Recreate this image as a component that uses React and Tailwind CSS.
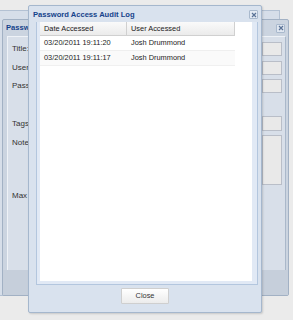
export default function App() {
  return (
    <div className="relative w-[293px] h-[320px] overflow-hidden bg-[#ebebeb] font-['Liberation_Sans',Arial,sans-serif] text-[7.4px] text-[#222]">
      {/* far back window */}
      <div className="absolute left-[-20px] top-[10px] w-[300px] h-[286px] bg-[#d6dee9] border border-[#b3c1d3]"></div>

      {/* back window */}
      <div className="absolute left-[2px] top-[19px] w-[287px] h-[277px] bg-[#cbd4e0] border border-[#a2b1c4] rounded-[2px] flex flex-col">
        <div className="h-[16px] flex items-center justify-between pl-[3px] pr-[3px]">
          <span className="font-bold text-[#15428b] text-[7.6px]">Password</span>
          <span className="w-[9px] h-[9px] flex items-center justify-center border border-[#a9b9cd] bg-[#dfe6f0] rounded-[1px]">
            <svg width="6" height="6" viewBox="0 0 6 6"><path d="M1 1L5 5M5 1L1 5" stroke="#5a7296" strokeWidth="1.2" /></svg>
          </span>
        </div>
        <div className="ml-[4px] mr-[2px] h-[234px] bg-[#d8dfe9] border-l border-t border-[#eef2f7] border-r-[#aab8ca] border-r flex flex-col pl-[4px] pr-[3px] pt-[5px]">
          <div className="flex items-center justify-between h-[14px]">
            <span className="text-[8px] text-[#333]">Title:</span>
            <span className="w-[20px] h-[14px] bg-[#e9e9e9] border border-[#b9bec8]"></span>
          </div>
          <div className="flex items-center justify-between h-[14px] mt-[5px]">
            <span className="text-[8px] text-[#333]">Username:</span>
            <span className="w-[20px] h-[14px] bg-[#e9e9e9] border border-[#b9bec8]"></span>
          </div>
          <div className="flex items-center justify-between h-[14px] mt-[4px]">
            <span className="text-[8px] text-[#333]">Password:</span>
            <span className="w-[20px] h-[14px] bg-[#e9e9e9] border border-[#b9bec8]"></span>
          </div>
          <div className="flex items-center justify-between h-[15px] mt-[23px]">
            <span className="text-[8px] text-[#333]">Tags:</span>
            <span className="w-[20px] h-[15px] bg-[#e9e9e9] border border-[#b9bec8]"></span>
          </div>
          <div className="flex items-start justify-between h-[50px] mt-[4px]">
            <span className="text-[8px] text-[#333] mt-[2px]">Notes:</span>
            <span className="w-[20px] h-[50px] bg-[#e9e9e9] border border-[#b9bec8]"></span>
          </div>
          <div className="flex items-center h-[12px] mt-[5px]">
            <span className="text-[8px] text-[#333]">Max Length:</span>
          </div>
        </div>
        <div className="flex-1 bg-[#c6cfdb]"></div>
      </div>

      {/* front window */}
      <div className="absolute left-[28px] top-[5px] w-[234px] h-[308px] bg-[#d9e2ee] border border-[#a5b7cd] rounded-[2px] flex flex-col shadow-[1px_1px_2px_rgba(0,0,0,0.15)]">
        <div className="h-[16px] flex items-center justify-between pl-[4px] pr-[3px] pt-[1px]">
          <span className="font-bold text-[#15428b] text-[7.6px]">Password Access Audit Log</span>
          <span className="w-[9px] h-[9px] flex items-center justify-center border border-[#a9b9cd] bg-[#e4eaf3] rounded-[1px]">
            <svg width="6" height="6" viewBox="0 0 6 6"><path d="M1 1L5 5M5 1L1 5" stroke="#5a7296" strokeWidth="1.2" /></svg>
          </span>
        </div>
        <div className="ml-[7px] mr-[3px] h-[263px] border border-[#b3c6de] border-t-0 bg-[#e1e9f5] pl-[3px] pr-[5px] pb-[3px] flex flex-col">
          <div className="flex-1 bg-white flex flex-col text-[#1a1a1a]">
            <div className="flex h-[14px] w-[195px] bg-gradient-to-b from-[#fafafa] to-[#ebebeb] border-b border-[#d0d0d0]">
              <div className="w-[87px] h-full flex items-center pl-[4px] border-r border-[#d0d0d0]">Date Accessed</div>
              <div className="w-[108px] h-full flex items-center pl-[4px] border-r border-[#d0d0d0]">User Accessed</div>
            </div>
            <div className="flex h-[15px] w-[195px] bg-white border-b border-[#efefef]">
              <div className="w-[87px] flex items-center pl-[4px]">03/20/2011 19:11:20</div>
              <div className="w-[108px] flex items-center pl-[4px]">Josh Drummond</div>
            </div>
            <div className="flex h-[15px] w-[195px] bg-[#fafafa] border-b border-[#f0f0f0]">
              <div className="w-[87px] flex items-center pl-[4px]">03/20/2011 19:11:17</div>
              <div className="w-[108px] flex items-center pl-[4px]">Josh Drummond</div>
            </div>
          </div>
        </div>
        <div className="flex-1 flex items-start justify-center pt-[3px]">
          <button className="w-[48px] h-[16px] bg-gradient-to-b from-white to-[#ececec] border border-[#cfcfcf] rounded-[1px] text-[7.4px] text-[#333] flex items-center justify-center">Close</button>
        </div>
      </div>
    </div>
  );
}
